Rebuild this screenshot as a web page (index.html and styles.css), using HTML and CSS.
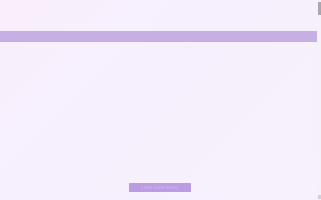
FILE: index.html
```html
<!DOCTYPE html>
<html lang="en">

<head>
    <meta charset="UTF-8">
    <meta name="viewport" content="width=device-width, initial-scale=1.0">
    <title>Page</title>
    <link rel="stylesheet" href="styles.css">
</head>

<body>
    <div class="page">
        <header class="top"></header>
        <nav class="bar"></nav>
        <main class="content">
            <div class="footer-row">
                <button class="btn-more">Load more items</button>
            </div>
        </main>
    </div>

    <!-- fake scrollbar, sits over the right edge -->
    <div class="scroll">
        <div class="scroll-thumb"></div>
        <div class="scroll-arrow"></div>
    </div>
</body>

</html>
```
FILE: styles.css
```css
html {
    background: #f7f0fe;
}

body {
    margin: 0;
    height: 200px;
    overflow: hidden;
    font-family: "Liberation Sans", Arial, sans-serif;
    background: linear-gradient(135deg, #f9effb 0%, #f6f0fe 40%, #f6f1fd 100%);
}

.page {
    margin-right: 4px;
}

.top {
    height: 31px;
}

.bar {
    height: 11px;
    background: #c6b0e3;
}

.content {
    height: 150px;
    display: flex;
    flex-direction: column;
    justify-content: flex-end;
}

.footer-row {
    display: flex;
    justify-content: center;
}

.btn-more {
    width: 62px;
    height: 9px;
    margin-left: 2px;
    padding: 0;
    border: 0;
    background: #b99ce2;
    color: #d2b4f6;
    font-size: 5px;
    line-height: 9px;
    font-family: "Liberation Sans", Arial, sans-serif;
}

.scroll {
    position: fixed;
    top: 0;
    right: 0;
    width: 4px;
    height: 200px;
    background: #f4f1f8;
    display: flex;
    flex-direction: column;
    justify-content: space-between;
    align-items: center;
}

.scroll-thumb {
    width: 3px;
    height: 13px;
    margin-top: 2px;
    background: #aaa6ae;
}

.scroll-arrow {
    width: 3px;
    height: 4px;
    margin-bottom: 1px;
    background: #d3d0d6;
}
```
